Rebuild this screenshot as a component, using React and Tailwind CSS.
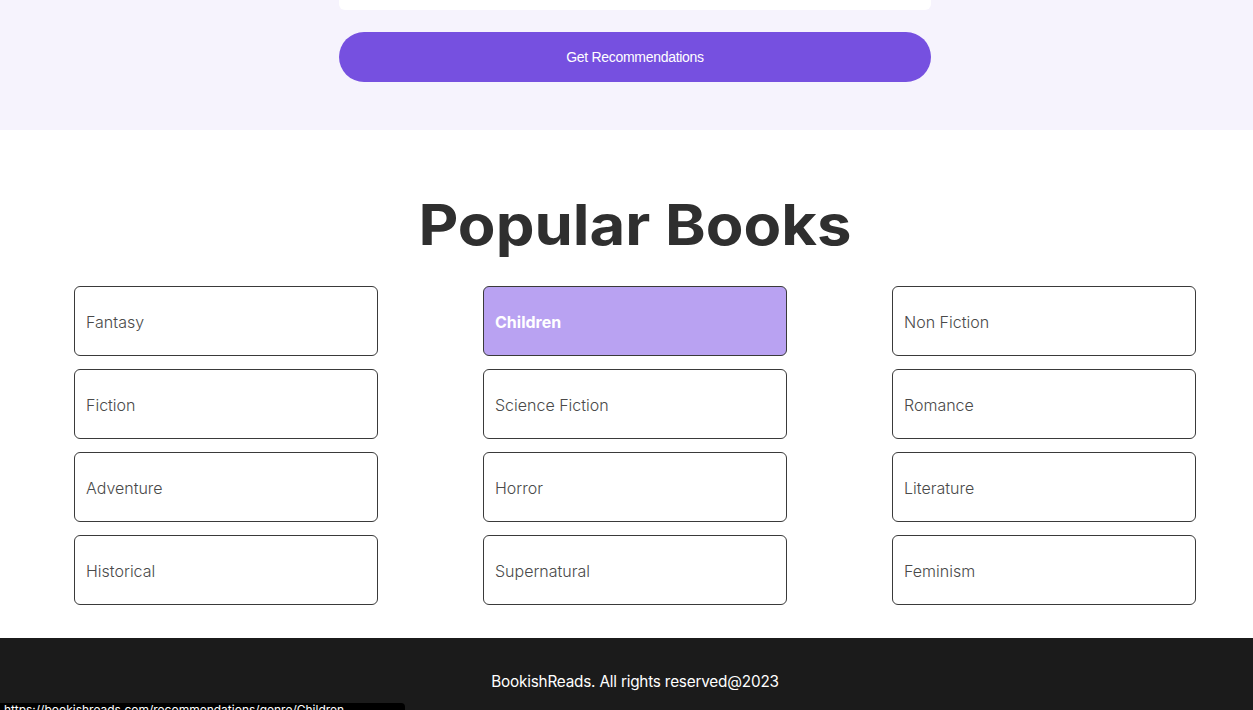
import React from "react";

const genres = [
    "Fantasy", "Children", "Non Fiction",
    "Fiction", "Science Fiction", "Romance",
    "Adventure", "Horror", "Literature",
    "Historical", "Supernatural", "Feminism",
];

const App = () => {
    return (
        <div className="relative min-h-[710px] bg-white font-['Inter',sans-serif] overflow-hidden">

            {/* RECOMMENDATION FORM */}
            <section className="h-[130px] bg-[#f6f3fd] flex flex-col items-center pl-[17px]">
                <div className="w-[592px] h-[10px] bg-white rounded-b-md" />
                <button className="mt-[22px] w-[592px] h-[50px] rounded-full bg-[#7650e0] text-white text-[14px] font-['Liberation_Sans',Arial,sans-serif] tracking-[-0.3px]">
                    Get Recommendations
                </button>
            </section>

            {/* POPULAR BOOKS */}
            <section className="pt-[61px] pb-[33px] pl-[17px]">
                <h2 className="text-center text-[#2f2f2f] text-[56px] leading-[68px] font-bold scale-x-[1.1]">
                    Popular Books
                </h2>

                <div className="mt-[27px] pl-[57px] grid grid-cols-[304px_304px_304px] gap-x-[105px] gap-y-[13px]">
                    {genres.map((g) => {
                        const active = g === "Children";
                        return (
                            <div
                                key={g}
                                className={
                                    active
                                        ? "h-[70px] flex items-center px-[11px] pt-px rounded-md border border-[#3a3a3a] bg-[#b9a2f2] text-white font-bold text-[16px]"
                                        : "h-[70px] flex items-center px-[11px] pt-px rounded-md border border-[#3a3a3a] bg-white text-[#4a4a4a] font-light text-[16px]"
                                }
                            >
                                {g}
                            </div>
                        );
                    })}
                </div>
            </section>

            {/* FOOTER */}
            <footer className="h-[100px] bg-[#1b1b1b] flex justify-center pt-[33px] pl-[17px]">
                <p className="text-white text-[15.3px] tracking-[-0.2px]">BookishReads. All rights reserved@2023</p>
            </footer>

            {/* STATUS BAR */}
            <div className="absolute left-0 top-[703px] w-[405px] h-[7px] bg-black rounded-tr overflow-hidden">
                <p className="text-white text-[12px] leading-[14px] pl-1">https://bookishreads.com/recommendations/genre/Children</p>
            </div>
        </div>
    );
};

export default App;
